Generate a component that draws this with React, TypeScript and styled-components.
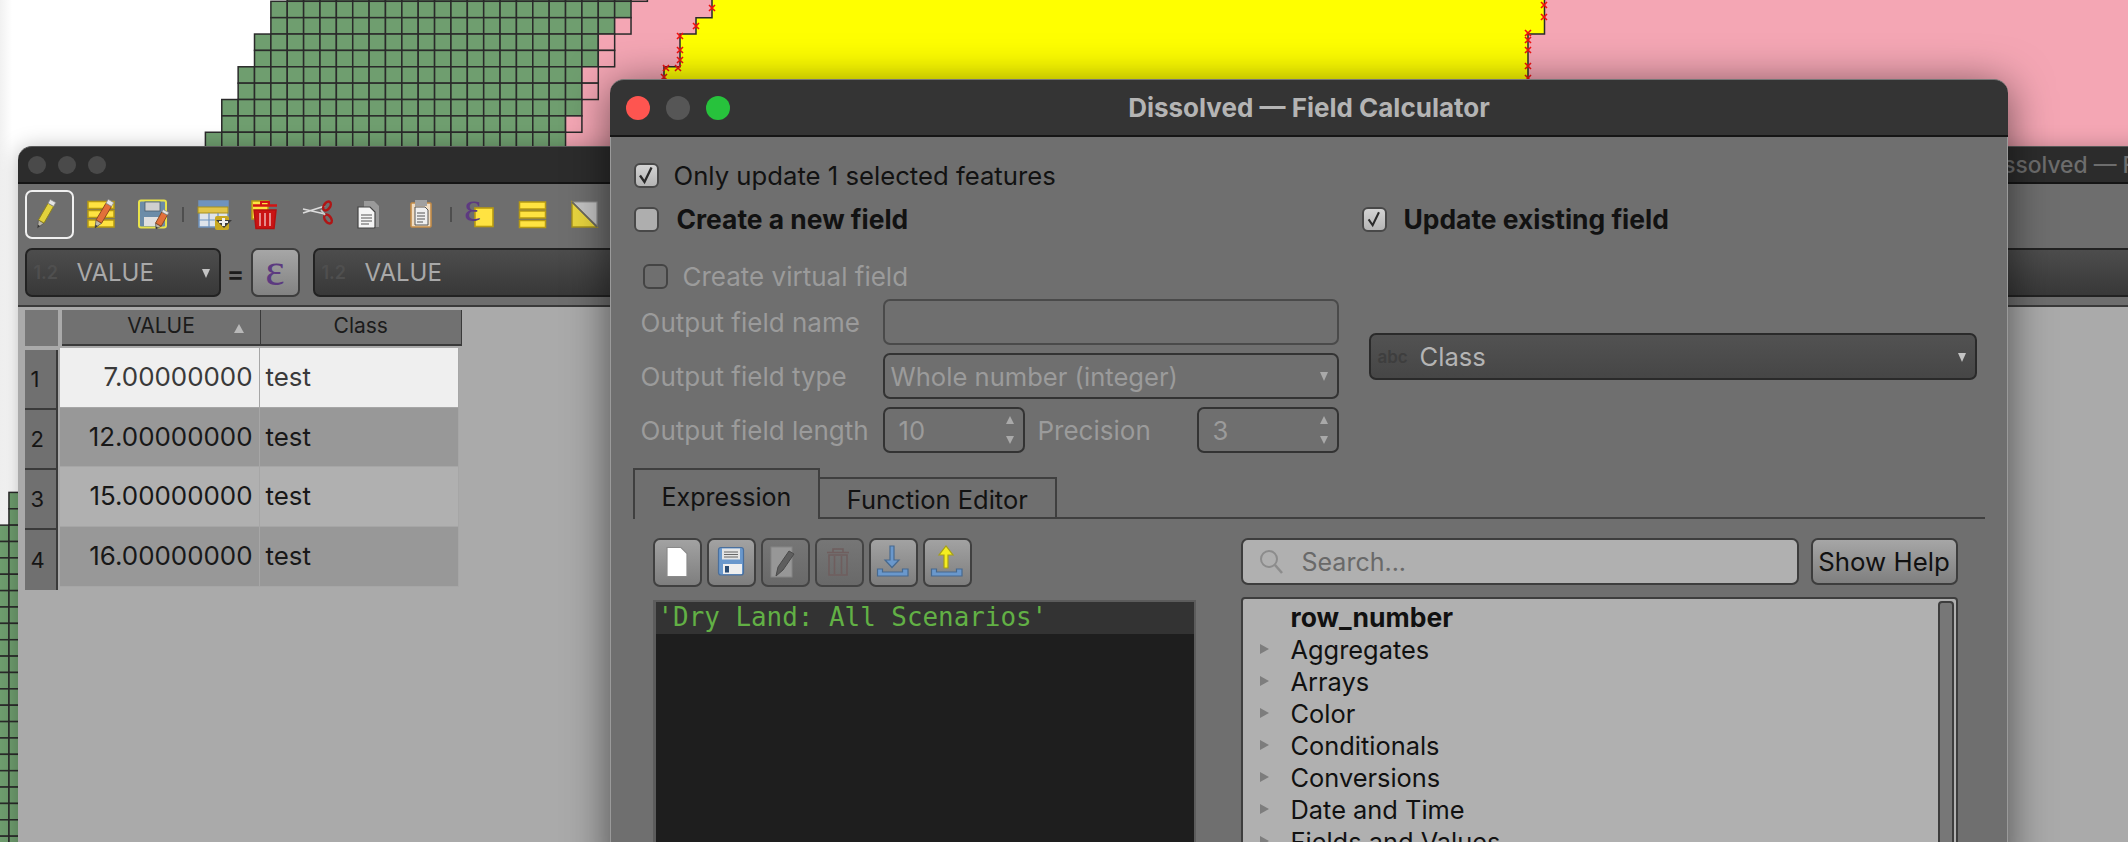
import React from "react";
import styled, { createGlobalStyle } from "styled-components";

const Global = createGlobalStyle`
  html, body { margin: 0; padding: 0; width: 2128px; height: 842px; overflow: hidden; background: #fff; }
  body { font-family: Inter, "Liberation Sans", sans-serif; font-size: 24px; color: #141414; }
  * { box-sizing: border-box; }
`;

const Desktop = styled.div`
  position: relative;
  width: 2128px;
  height: 842px;
  overflow: hidden;
  background: linear-gradient(to right, #f1f1f1 0, #fff 12px);
`;

const MapCanvas = styled.svg`
  position: absolute;
  left: 0;
  top: 0;
`;

const Window = styled.div<{ $left: number; $top: number; $width: number; $height: number; $z: number; $shadow: string }>`
  position: absolute;
  left: ${(p) => p.$left}px;
  top: ${(p) => p.$top}px;
  width: ${(p) => p.$width}px;
  height: ${(p) => p.$height}px;
  z-index: ${(p) => p.$z};
  border-radius: 14px 14px 0 0;
  box-shadow: ${(p) => p.$shadow};
  display: flex;
  flex-direction: column;
`;

const TitleBar = styled.div<{ $bg: string; $height: number; $light: string }>`
  flex: none;
  height: ${(p) => p.$height}px;
  background: ${(p) => p.$bg};
  border-radius: 14px 14px 0 0;
  border-top: 1.5px solid ${(p) => p.$light};
  border-bottom: 2px solid #151515;
  position: relative;
  display: flex;
  align-items: center;
`;

const Lights = styled.div<{ $pad: number; $gap: number }>`
  display: flex;
  padding-left: ${(p) => p.$pad}px;
  gap: ${(p) => p.$gap}px;
`;

const Light = styled.span<{ $size: number; $color: string }>`
  width: ${(p) => p.$size}px;
  height: ${(p) => p.$size}px;
  border-radius: 50%;
  background: ${(p) => p.$color};
`;

const BackTitle = styled.div`
  margin-left: 1875px;
  font-size: 22.8px;
  font-weight: 500;
  color: #6d6d6d;
  white-space: nowrap;
`;

const DialogTitle = styled.div`
  position: absolute;
  left: 0;
  right: 0;
  text-align: center;
  font-size: 26px;
  font-weight: 700;
  color: #b4b4b4;
  padding-bottom: 1px;
`;

const BackBody = styled.div`
  flex: 1;
  background: #6e6e6e;
  display: flex;
  flex-direction: column;
`;

const ToolRow = styled.div`
  display: flex;
  gap: 3px;
  padding: 6px 0 0 6.5px;
`;

const ToolButton = styled.div<{ $active?: boolean }>`
  width: 49px;
  height: 49px;
  border-radius: 7px;
  border: ${(p) => (p.$active ? "2.5px solid #f0f0f0" : "none")};
`;

const ToolSvg = styled.svg<{ $inset?: boolean }>`
  display: block;
  width: 49px;
  height: 49px;
  overflow: visible;
  margin: ${(p) => (p.$inset ? "-2.5px" : "0")};
`;

const ToolSep = styled.div`
  width: 5px;
  display: flex;
  justify-content: center;
  align-items: center;
  &::after {
    content: "";
    width: 2px;
    height: 15px;
    background: #4e4e4e;
  }
`;

const FieldBar = styled.div`
  display: flex;
  align-items: flex-start;
  padding: 9px 0 0 6.5px;
  height: 66px;
`;

const DarkCombo = styled.div<{ $width?: number; $flex?: boolean }>`
  width: ${(p) => (p.$width ? `${p.$width}px` : "auto")};
  flex: ${(p) => (p.$flex ? 1 : "none")};
  height: 49px;
  border: 2px solid #222;
  border-radius: 7px;
  background: linear-gradient(#4d4d4d, #383838);
  display: flex;
  align-items: center;
  color: #a9a9a9;
  font-size: 24px;
  position: relative;
`;

const TypeTag = styled.span<{ $width: number; $size?: number; $color?: string }>`
  width: ${(p) => p.$width}px;
  flex: none;
  padding-left: 7px;
  font-size: ${(p) => p.$size ?? 18}px;
  font-weight: 600;
  color: ${(p) => p.$color ?? "#4f4f4f"};
`;

const ComboArrow = styled.span<{ $color?: string }>`
  position: absolute;
  right: 9px;
  top: 50%;
  margin-top: -4px;
  width: 0;
  height: 0;
  border-left: 4.5px solid transparent;
  border-right: 4.5px solid transparent;
  border-top: 9px solid ${(p) => p.$color ?? "#c4c4c4"};
`;

const Equals = styled.span`
  width: 30px;
  flex: none;
  text-align: center;
  font-size: 26px;
  font-weight: 600;
  color: #1c1c1c;
  line-height: 52px;
`;

const ExprButton = styled.div`
  width: 49px;
  height: 49px;
  flex: none;
  margin-right: 13px;
  border: 2px solid #3d3d3d;
  border-radius: 7px;
  background: linear-gradient(#a6a6a6, #828282);
  color: #5c3a80;
  font-family: "Liberation Serif", serif;
  font-size: 46px;
  display: flex;
  align-items: center;
  justify-content: center;
  line-height: 1;
  padding-bottom: 6px;
`;

const TableArea = styled.div`
  flex: 1;
  border-top: 2px solid #3a3a3a;
  background: #aaaaaa;
  padding: 3px 0 0 6.5px;
`;

const HeaderRow = styled.div`
  display: flex;
  height: 36px;
`;

const Corner = styled.div`
  width: 33.5px;
  margin-right: 4px;
  background: #777;
`;

const HeaderCell = styled.div<{ $width: number }>`
  width: ${(p) => p.$width}px;
  background: #717171;
  border-bottom: 2.5px solid #3a3a3a;
  border-right: 1.5px solid #3a3a3a;
  font-size: 21px;
  color: #1b1b1b;
  display: flex;
  align-items: center;
  justify-content: center;
  padding-bottom: 3px;
  position: relative;
`;

const SortMark = styled.span`
  position: absolute;
  right: 16px;
  top: 14px;
  width: 0;
  height: 0;
  border-left: 5px solid transparent;
  border-right: 5px solid transparent;
  border-bottom: 9px solid #b8b8b8;
`;

const TableBody = styled.div`
  display: flex;
`;

const RowHeads = styled.div`
  width: 33.5px;
  margin-top: 4px;
  border-right: 2px solid #3a3a3a;
`;

const RowHead = styled.div`
  height: 60px;
  background: #707070;
  border-bottom: 2px solid #3a3a3a;
  padding-left: 6px;
  display: flex;
  align-items: center;
  font-size: 22px;
  color: #151515;
  &:last-child { border-bottom: none; }
`;

const Cells = styled.div`
  margin: 2px 0 0 2px;
  display: grid;
  grid-template-columns: 199.5px 199px;
  grid-auto-rows: 59.7px;
`;

const Cell = styled.div<{ $shade: number; $num?: boolean }>`
  background: ${(p) => ["#efefef", "#989898", "#b0b0b0"][p.$shade]};
  color: ${(p) => (p.$shade === 0 ? "#3a3a3a" : "#181818")};
  border-right: 1.5px solid #a6a6a6;
  border-bottom: 1.5px solid #a6a6a6;
  font-size: 25.9px;
  display: flex;
  align-items: center;
  justify-content: ${(p) => (p.$num ? "flex-end" : "flex-start")};
  padding: ${(p) => (p.$num ? "0 6px 2px 0" : "0 0 2px 6px")};
`;

const DialogBody = styled.div`
  flex: 1;
  min-height: 0;
  background: #6f6f6f;
  border-left: 1.5px solid #9a9a9a;
  border-right: 1.5px solid #9a9a9a;
  padding: 26px 0 0 22.5px;
  display: flex;
  flex-direction: column;
`;

const CheckRow = styled.label<{ $indent?: number; $top?: number; $gap: number }>`
  display: flex;
  align-items: center;
  height: 24px;
  gap: ${(p) => p.$gap}px;
  margin-left: ${(p) => p.$indent ?? 0}px;
  margin-top: ${(p) => p.$top ?? 0}px;
`;

const Box = styled.span<{ $state: "on" | "off" | "dim" }>`
  flex: none;
  width: 25px;
  height: 25px;
  border-radius: 6px;
  border: 2px solid ${(p) => (p.$state === "dim" ? "#444" : "#484848")};
  background: ${(p) =>
    p.$state === "on" ? "linear-gradient(#d4d4d4,#b4b4b4)" : p.$state === "off" ? "#aeaeae" : "transparent"};
  display: flex;
  align-items: center;
  justify-content: center;
`;

const Label = styled.span<{ $bold?: boolean; $dim?: boolean; $size?: number }>`
  font-size: ${(p) => p.$size ?? 26}px;
  font-weight: ${(p) => (p.$bold ? 700 : 400)};
  color: ${(p) => (p.$dim ? "#9b9b9b" : "#121212")};
  white-space: nowrap;
`;

const FieldColumns = styled.div`
  display: grid;
  grid-template-columns: 728px 1fr;
  margin-top: 20px;
`;

const FormGrid = styled.div`
  display: grid;
  grid-template-columns: 242px 456px;
  grid-auto-rows: 46px;
  row-gap: 8px;
  margin: 11px 0 0 7px;
  align-items: center;
`;

const PlainBox = styled.div<{ $strong?: boolean }>`
  height: 46px;
  border: 2px solid ${(p) => (p.$strong ? "#333" : "#4a4a4a")};
  border-radius: 7px;
  display: flex;
  align-items: center;
  color: #9b9b9b;
  font-size: 25.6px;
  position: relative;
  padding-left: 6px;
`;

const SpinLine = styled.div`
  display: flex;
  align-items: center;
`;

const Spin = styled(PlainBox)`
  flex: none;
  width: 142px;
  padding-left: 14px;
`;

const SpinArrow = styled.span<{ $up?: boolean }>`
  position: absolute;
  right: 9px;
  ${(p) => (p.$up ? "top: 7px;" : "bottom: 7px;")}
  width: 0;
  height: 0;
  border-left: 4px solid transparent;
  border-right: 4px solid transparent;
  ${(p) => (p.$up ? "border-bottom: 8px solid #a9a9a9;" : "border-top: 8px solid #a9a9a9;")}
`;

const PrecisionLabel = styled(Label)`
  flex: 1;
  margin-left: 13px;
`;

const ClassCombo = styled.div`
  margin: 102px 0 0 7px;
  width: 608px;
  height: 47px;
  border: 2px solid #2a2a2a;
  border-radius: 7px;
  background: linear-gradient(#525252, #464646);
  display: flex;
  align-items: center;
  color: #b4b4b4;
  font-size: 25.6px;
  position: relative;
`;

const Tabs = styled.div`
  display: flex;
  align-items: flex-end;
  margin: 15px 22px 0 -0.5px;
  height: 51px;
  border-bottom: 2px solid #3f3f3f;
`;

const Tab = styled.div<{ $active?: boolean }>`
  height: ${(p) => (p.$active ? "51px" : "40px")};
  padding: ${(p) => (p.$active ? "4px 26.5px 0" : "2px 27px 0")};
  margin-bottom: ${(p) => (p.$active ? "-2px" : "0")};
  border: 2px solid #3f3f3f;
  border-bottom: none;
  border-left-width: ${(p) => (p.$active ? "2px" : "0")};
  background: #6f6f6f;
  display: flex;
  align-items: center;
  font-size: ${(p) => (p.$active ? "25px" : "25.5px")};
  color: #121212;
`;

const Panes = styled.div`
  flex: 1;
  min-height: 0;
  display: grid;
  grid-template-columns: 543px 717px;
  column-gap: 45px;
  padding: 19px 0 0 19px;
`;

const Pane = styled.div`
  display: flex;
  flex-direction: column;
  min-height: 0;
`;

const MiniBar = styled.div`
  display: flex;
  gap: 5px;
  height: 49px;
`;

const MiniButton = styled.div<{ $off?: boolean }>`
  width: 49px;
  height: 49px;
  border: 2px solid ${(p) => (p.$off ? "#444" : "#404040")};
  border-radius: 7px;
  background: ${(p) => (p.$off ? "linear-gradient(#767676,#696969)" : "linear-gradient(#a2a2a2,#7e7e7e)")};
`;

const MiniSvg = styled.svg`
  display: block;
  width: 49px;
  height: 49px;
  margin: -2px;
`;

const Editor = styled.div`
  flex: 1;
  margin-top: 13px;
  border: 2px solid #5c5c5c;
  border-left-width: 3px;
  background: #1e1e1e;
`;

const EditorLine = styled.div`
  height: 32px;
  background: #333;
  color: #62b045;
  font-family: "DejaVu Sans Mono", monospace;
  font-size: 25.9px;
  line-height: 30px;
  padding-left: 2px;
  white-space: pre;
`;

const SearchLine = styled.div`
  display: flex;
  gap: 12px;
  height: 47px;
`;

const SearchBox = styled.div`
  flex: 1;
  border: 2px solid #3d3d3d;
  border-radius: 7px;
  background: #b0b0b0;
  display: flex;
  align-items: center;
  padding-left: 15px;
  gap: 18px;
  color: #696969;
  font-size: 25px;
`;

const HelpButton = styled.div`
  width: 147px;
  flex: none;
  border: 2px solid #3d3d3d;
  border-radius: 7px;
  background: linear-gradient(#a6a6a6, #7f7f7f);
  display: flex;
  align-items: center;
  justify-content: center;
  color: #111;
  font-size: 25.8px;
  white-space: nowrap;
`;

const Tree = styled.div`
  flex: 1;
  margin-top: 12px;
  border: 2px solid #3d3d3d;
  border-radius: 4px 4px 0 0;
  background: #b0b0b0;
  padding: 2px 2px 0 0;
  display: flex;
  overflow: hidden;
`;

const TreeList = styled.div`
  flex: 1;
`;

const TreeRow = styled.div<{ $bold?: boolean }>`
  height: 32px;
  display: flex;
  align-items: center;
  padding-left: 48px;
  position: relative;
  font-size: ${(p) => (p.$bold ? "26.5px" : "25.4px")};
  font-weight: ${(p) => (p.$bold ? 700 : 400)};
  color: #111;
`;

const Disclosure = styled.span`
  position: absolute;
  left: 17px;
  top: 11px;
  width: 0;
  height: 0;
  border-top: 5px solid transparent;
  border-bottom: 5px solid transparent;
  border-left: 9px solid #7d7d7d;
`;

const Scrollbar = styled.div`
  flex: none;
  width: 16px;
  background: #777;
  border: 2px solid #3d3d3d;
  border-radius: 4px 4px 0 0;
`;

const P = ({ d, f, s, w }: { d: string; f: string; s?: string; w?: number }) => (
  <path d={d} fill={f} stroke={s ?? "none"} strokeWidth={w ?? 1} strokeLinejoin="round" />
);

const Pencil = ({ x0, y0, x1, y1, body, edge }: { x0: number; y0: number; x1: number; y1: number; body: string; edge: string }) => {
  const dx = x1 - x0;
  const dy = y1 - y0;
  const len = Math.hypot(dx, dy);
  const nx = (-dy / len) * 3.2;
  const ny = (dx / len) * 3.2;
  const a = 0.24;
  const b = 0.86;
  const ax = x0 + dx * a;
  const ay = y0 + dy * a;
  const bx = x0 + dx * b;
  const by = y0 + dy * b;
  return (
    <g>
      <P d={`M${x0} ${y0}L${ax + nx} ${ay + ny}L${ax - nx} ${ay - ny}Z`} f="#bdb8a8" s="#555" w={0.8} />
      <P d={`M${x0} ${y0}L${x0 + dx * 0.1 + nx * 0.4} ${y0 + dy * 0.1 + ny * 0.4}L${x0 + dx * 0.1 - nx * 0.4} ${y0 + dy * 0.1 - ny * 0.4}Z`} f="#333" />
      <P d={`M${ax + nx} ${ay + ny}L${bx + nx} ${by + ny}L${bx - nx} ${by - ny}L${ax - nx} ${ay - ny}Z`} f={body} s={edge} w={1} />
      <P d={`M${bx + nx} ${by + ny}L${x1 + nx} ${y1 + ny}L${x1 - nx} ${y1 - ny}L${bx - nx} ${by - ny}Z`} f="#e4e4e4" s="#8a8a8a" w={0.8} />
    </g>
  );
};

const YB = "#ffe341";
const YE = "#b79a12";

const icons: React.ReactNode[] = [
  <Pencil x0={13.5} y0={38} x1={29} y1={11} body="#e2d23c" edge="#8c8120" />,
  <g>
    <rect x="11" y="11.5" width="26" height="7" fill={YB} stroke={YE} strokeWidth="1.5" />
    <rect x="11" y="20.5" width="26" height="7" fill={YB} stroke={YE} strokeWidth="1.5" />
    <rect x="11" y="30" width="26" height="7" fill={YB} stroke={YE} strokeWidth="1.5" />
    <Pencil x0={18} y0={38} x1={34} y1={11} body="#e2703a" edge="#8c4a20" />
  </g>,
  <g>
    <rect x="10" y="10.5" width="27" height="27" rx="2" fill="#6c8ca8" stroke="#e8e24a" strokeWidth="2" />
    <rect x="16" y="12" width="15" height="9" fill="#cfcfcf" stroke="#4c5c6c" strokeWidth="0.8" />
    <rect x="15" y="27" width="15" height="9" fill="#e0e0e0" />
    <Pencil x0={27} y0={39} x1={37} y1={21} body="#e2703a" edge="#8c4a20" />
  </g>,
  <g>
    <rect x="10" y="11" width="29" height="26" fill="#dfe4ea" stroke="#6f93bd" strokeWidth="1.5" />
    <rect x="10" y="11" width="29" height="6" fill="#6f93bd" />
    <rect x="9" y="17" width="30" height="6" fill="#e0c44a" stroke="#a68f1e" strokeWidth="1" />
    <path d="M20 23v14M29 23v14M10 30h29" stroke="#6f93bd" strokeWidth="1.2" />
    <rect x="26" y="26" width="14" height="14" rx="2" fill="#c8a821" />
    <path d="M27 30h16l-8 8z" fill="#3c3c3c" />
    <path d="M33 28h3v8h-3zM30 31h9v2h-9z" fill="#eee" />
  </g>,
  <g>
    <rect x="11" y="11" width="16" height="18" fill={YB} stroke={YE} strokeWidth="1.5" />
    <path d="M13 20h22l-2 18.5H15z" fill="#ca1414" stroke="#b50f0f" strokeWidth="1.5" />
    <path d="M12 15.5h24" stroke="#d21414" strokeWidth="2.5" />
    <path d="M20 15v-3h8v3" fill="none" stroke="#d21414" strokeWidth="2" />
    <path d="M19 23v13M24 23v13M29 23v13" stroke="#e58a8a" strokeWidth="2" />
  </g>,
  <g>
    <path d="M10 19l22 5M10 23l22-7" stroke="#dcdcdc" strokeWidth="1.6" />
    <ellipse cx="34" cy="16" rx="3" ry="5" fill="none" stroke="#b01515" strokeWidth="2.5" transform="rotate(35 34 16)" />
    <ellipse cx="35" cy="29" rx="3" ry="5" fill="none" stroke="#b01515" strokeWidth="2.5" transform="rotate(-35 35 29)" />
    <path d="M28 20l4 5" stroke="#c7c7c7" strokeWidth="1.6" />
  </g>,
  <g>
    <path d="M19 11h10l5 5v21H19z" fill="#9a9a9a" />
    <path d="M13 17h12l5 5v15a1 1 0 0 1-1 1H13z" fill="#f4f4f4" stroke="#444" strokeWidth="1.2" />
    <path d="M16 25h11M16 28h11M16 31h11M16 34h8" stroke="#555" strokeWidth="1.2" />
  </g>,
  <g>
    <rect x="14" y="13" width="20" height="24" rx="1" fill="#efdcc2" stroke="#c48c48" strokeWidth="1.6" />
    <rect x="18" y="10" width="12" height="6" fill="#a0a0a0" />
    <path d="M18 17h10l3 3v15H18z" fill="#efefef" stroke="#555" strokeWidth="1" />
    <path d="M20 23h8M20 26h8M20 29h8M20 32h6" stroke="#555" strokeWidth="1.1" />
  </g>,
  <g>
    <rect x="18" y="18" width="18" height="18.5" fill={YB} stroke={YE} strokeWidth="1.6" />
    <text x="7" y="31" fontFamily="Liberation Serif, serif" fontSize="40" fill="#5c3a80">ε</text>
  </g>,
  <g>
    <rect x="10.5" y="12" width="26" height="7" fill={YB} stroke={YE} strokeWidth="1.5" />
    <rect x="10.5" y="21" width="26" height="7" fill={YB} stroke={YE} strokeWidth="1.5" />
    <rect x="10.5" y="30.5" width="26" height="7" fill={YB} stroke={YE} strokeWidth="1.5" />
  </g>,
  <g>
    <path d="M11 12h25v24z" fill="#c4c4c4" stroke="#8f8f8f" strokeWidth="1.2" />
    <path d="M11 12l25 25H11z" fill="#e9d63f" stroke="#a8941c" strokeWidth="1.4" />
    <path d="M11 12l25 25" stroke="#666" strokeWidth="1.6" />
  </g>,
];

const ToolIcon = ({ children, active }: { children: React.ReactNode; active?: boolean }) => (
  <ToolButton $active={active}>
    <ToolSvg $inset={active} viewBox="0 0 49 49">{children}</ToolSvg>
  </ToolButton>
);

const miniIcons: { off?: boolean; node: React.ReactNode }[] = [
  { node: <path d="M14 9.5h14l6 6v23H14z" fill="#fff" stroke="#8a8a8a" strokeWidth="1.2" /> },
  {
    node: (
      <g>
        <rect x="11.5" y="9.5" width="25" height="27.5" rx="2.5" fill="#6a98cc" stroke="#4a6f9c" strokeWidth="1.2" />
        <rect x="15" y="10.5" width="18" height="11" fill="#e4e4e4" />
        <path d="M17 14h14M17 16.5h14M17 19h14" stroke="#666" strokeWidth="1" />
        <rect x="16" y="26" width="19" height="10" fill="#efefef" />
        <rect x="18" y="28" width="4" height="6.5" fill="#2a4b72" />
      </g>
    ),
  },
  {
    off: true,
    node: (
      <g>
        <rect x="10" y="9" width="21" height="30" fill="#979797" stroke="#858585" strokeWidth="1" />
        <path d="M15 38l2-9 11-16 5 3-11 16z" fill="#5e5e5e" stroke="#4a4a4a" strokeWidth="1" />
      </g>
    ),
  },
  {
    off: true,
    node: (
      <g fill="none" stroke="#6f5e5e" strokeWidth="1.6">
        <path d="M12 14.5h22M18 14v-3h10v3" />
        <path d="M14 17h18v20H14zM19.5 18v18M26.5 18v18" />
      </g>
    ),
  },
  {
    node: (
      <g stroke="#46698f" strokeWidth="1.2">
        <path d="M21 8h4v14h5l-7 7.5-7-7.5h5z" fill="#6a98cc" />
        <path d="M8.5 31h5v3h20v-3h5.5v7H8.5z" fill="#6a98cc" />
      </g>
    ),
  },
  {
    node: (
      <g>
        <path d="M21 30V17h-5l7-9 7 9h-5v13z" fill="#f4ee20" stroke="#a7a019" strokeWidth="1.2" />
        <path d="M8.5 31h5v3h20v-3h5.5v7H8.5z" fill="#6a98cc" stroke="#46698f" strokeWidth="1.2" />
      </g>
    ),
  },
];

const CheckMark = ({ size }: { size: number }) => (
  <svg width={size} height={size} viewBox="0 0 20 20">
    <path d="M4 10.5l4.5 6.5L15.5 2.5" fill="none" stroke="#2a2a2a" strokeWidth="2.3" />
  </svg>
);

const xAt = (n: number) => 205.4 + 16.37 * n;
const yAt = (r: number) => 1.3 + 16.37 * r;

const stair: [number, number, number, number][] = [
  [-1, 5, 26, 27],
  [0, 4, 26, 26],
  [1, 4, 25, 26],
  [2, 3, 24, 25],
  [3, 3, 24, 25],
  [4, 2, 23, 24],
  [5, 2, 23, 24],
  [6, 1, 23, 23],
  [7, 1, 22, 23],
  [8, 0, 22, 22],
];

const cellRects: React.ReactNode[] = [];
stair.forEach(([r, l, g, e]) => {
  for (let n = l; n < e; n++) {
    cellRects.push(
      <rect
        key={`${r}:${n}`}
        x={xAt(n)}
        y={yAt(r)}
        width={16.37}
        height={16.37}
        fill={n < g ? "#6f9e6f" : "#f4a6b4"}
        stroke="#2a2a2a"
        strokeWidth="1.5"
      />
    );
  }
});
for (let r = 30; r < 52; r++) {
  for (let n = r < 32 ? -12 : -13; n < -11; n++) {
    cellRects.push(
      <rect key={`l${r}:${n}`} x={xAt(n)} y={yAt(r)} width={16.37} height={16.37} fill="#6f9e6f" stroke="#2a2a2a" strokeWidth="1.5" />
    );
  }
}

const marks: [number, number][] = [
  [712, 8], [696, 26], [680, 36], [680, 50], [680, 60], [666, 68], [678, 68], [664, 77],
  [1528, 40], [1528, 50], [1528, 66], [1528, 78], [1544, 5], [1544, 17], [1528, 33],
];

const Title = "Dissolved — Field Calculator";

const tableRows = [
  { n: "1", v: "7.00000000", shade: 0 },
  { n: "2", v: "12.00000000", shade: 1 },
  { n: "3", v: "15.00000000", shade: 2 },
  { n: "4", v: "16.00000000", shade: 1 },
];

const treeItems = ["Aggregates", "Arrays", "Color", "Conditionals", "Conversions", "Date and Time", "Fields and Values"];

export default function App() {
  return (
    <Desktop>
      <Global />
      <MapCanvas width="2128" height="842" viewBox="0 0 2128 842">
        <rect x="500" y="0" width="1628" height="150" fill="#f4a6b4" />
        <path
          d="M712 -5V17.7H696V34H680V66.7H664V120H1528V34H1544.5V-5Z"
          fill="#ffff00"
          stroke="#2a2a2a"
          strokeWidth="1.5"
        />
        {cellRects}
        {marks.map(([x, y], i) => (
          <path key={i} d={`M${x - 3} ${y - 3}L${x + 3} ${y + 3}M${x + 3} ${y - 3}L${x - 3} ${y + 3}`} stroke="#f01010" strokeWidth="1.6" />
        ))}
      </MapCanvas>

      <Window $left={18} $top={146} $width={2200} $height={800} $z={1} $shadow="0 2px 22px rgba(0,0,0,.28)">
        <TitleBar $bg="#2c2c2c" $height={38} $light="#5a5a5a">
          <Lights $pad={10} $gap={12}>
            <Light $size={18} $color="#4a4a4a" />
            <Light $size={18} $color="#4a4a4a" />
            <Light $size={18} $color="#4a4a4a" />
          </Lights>
          <BackTitle>Dissolved — F</BackTitle>
        </TitleBar>
        <BackBody>
          <ToolRow>
            {icons.slice(0, 3).map((n, i) => (
              <ToolIcon key={i} active={i === 0}>{n}</ToolIcon>
            ))}
            <ToolSep />
            {icons.slice(3, 8).map((n, i) => (
              <ToolIcon key={i}>{n}</ToolIcon>
            ))}
            <ToolSep />
            {icons.slice(8).map((n, i) => (
              <ToolIcon key={i}>{n}</ToolIcon>
            ))}
          </ToolRow>
          <FieldBar>
            <DarkCombo $width={196}>
              <TypeTag $width={50}>1.2</TypeTag>
              VALUE
              <ComboArrow />
            </DarkCombo>
            <Equals>=</Equals>
            <ExprButton>ε</ExprButton>
            <DarkCombo $flex>
              <TypeTag $width={50}>1.2</TypeTag>
              VALUE
            </DarkCombo>
          </FieldBar>
          <TableArea>
            <HeaderRow>
              <Corner />
              <HeaderCell $width={199}>
                VALUE
                <SortMark />
              </HeaderCell>
              <HeaderCell $width={200.5}>Class</HeaderCell>
            </HeaderRow>
            <TableBody>
              <RowHeads>
                {tableRows.map((r) => (
                  <RowHead key={r.n}>{r.n}</RowHead>
                ))}
              </RowHeads>
              <Cells>
                {tableRows.map((r) => (
                  <React.Fragment key={r.n}>
                    <Cell $shade={r.shade} $num>{r.v}</Cell>
                    <Cell $shade={r.shade}>test</Cell>
                  </React.Fragment>
                ))}
              </Cells>
            </TableBody>
          </TableArea>
        </BackBody>
      </Window>

      <Window $left={610} $top={79} $width={1398} $height={800} $z={2} $shadow="0 6px 44px rgba(0,0,0,.55)">
        <TitleBar $bg="#343434" $height={58} $light="#777">
          <Lights $pad={16} $gap={16}>
            <Light $size={24} $color="#fe5550" />
            <Light $size={24} $color="#565656" />
            <Light $size={24} $color="#27c23c" />
          </Lights>
          <DialogTitle>{Title}</DialogTitle>
        </TitleBar>
        <DialogBody>
          <CheckRow $gap={15}>
            <Box $state="on"><CheckMark size={20} /></Box>
            <Label $size={25.7}>Only update 1 selected features</Label>
          </CheckRow>
          <FieldColumns>
            <div>
              <CheckRow $gap={18}>
                <Box $state="off" />
                <Label $bold $size={26.4}>Create a new field</Label>
              </CheckRow>
              <CheckRow $gap={15} $indent={9} $top={33}>
                <Box $state="dim" />
                <Label $dim>Create virtual field</Label>
              </CheckRow>
              <FormGrid>
                <Label $dim>Output field name</Label>
                <PlainBox />
                <Label $dim>Output field type</Label>
                <PlainBox $strong>
                  Whole number (integer)
                  <ComboArrow $color="#a9a9a9" />
                </PlainBox>
                <Label $dim>Output field length</Label>
                <SpinLine>
                  <Spin $strong>
                    10
                    <SpinArrow $up />
                    <SpinArrow />
                  </Spin>
                  <PrecisionLabel $dim>Precision</PrecisionLabel>
                  <Spin $strong>
                    3
                    <SpinArrow $up />
                    <SpinArrow />
                  </Spin>
                </SpinLine>
              </FormGrid>
            </div>
            <div>
              <CheckRow $gap={17}>
                <Box $state="on"><CheckMark size={18} /></Box>
                <Label $bold $size={26.4}>Update existing field</Label>
              </CheckRow>
              <ClassCombo>
                <TypeTag $width={49} $size={17} $color="#3e3e3e">abc</TypeTag>
                Class
                <ComboArrow />
              </ClassCombo>
            </div>
          </FieldColumns>
          <Tabs>
            <Tab $active>Expression</Tab>
            <Tab>Function Editor</Tab>
          </Tabs>
          <Panes>
            <Pane>
              <MiniBar>
                {miniIcons.map((m, i) => (
                  <MiniButton key={i} $off={m.off}>
                    <MiniSvg viewBox="0 0 49 49">{m.node}</MiniSvg>
                  </MiniButton>
                ))}
              </MiniBar>
              <Editor>
                <EditorLine>'Dry Land: All Scenarios'</EditorLine>
              </Editor>
            </Pane>
            <Pane>
              <SearchLine>
                <SearchBox>
                  <svg width="26" height="26" viewBox="0 0 26 26">
                    <circle cx="11" cy="10" r="8" fill="none" stroke="#8c8c8c" strokeWidth="2" />
                    <path d="M17 16l7 8" stroke="#8c8c8c" strokeWidth="2.6" />
                  </svg>
                  Search...
                </SearchBox>
                <HelpButton>Show Help</HelpButton>
              </SearchLine>
              <Tree>
                <TreeList>
                  <TreeRow $bold>row_number</TreeRow>
                  {treeItems.map((t) => (
                    <TreeRow key={t}>
                      <Disclosure />
                      {t}
                    </TreeRow>
                  ))}
                </TreeList>
                <Scrollbar />
              </Tree>
            </Pane>
          </Panes>
        </DialogBody>
      </Window>
    </Desktop>
  );
}
